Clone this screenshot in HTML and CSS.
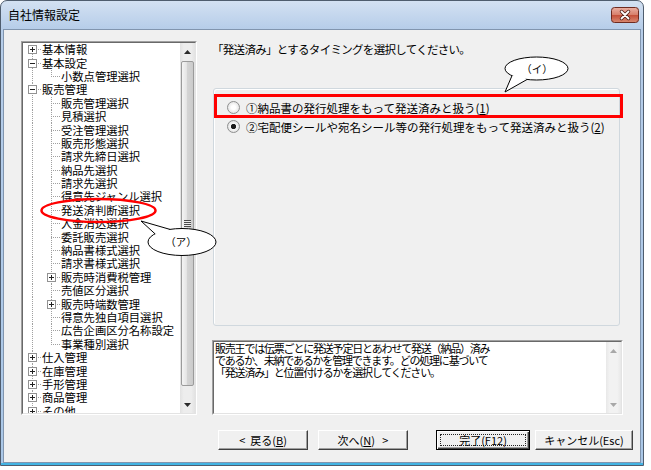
FILE: index.html
```html
<!DOCTYPE html>
<html lang="ja">
<head>
<meta charset="utf-8">
<title>自社情報設定</title>
<link rel="stylesheet" href="styles.css">
</head>
<body>
<div class="window">
  <div class="titlebar">
    <span class="title">自社情報設定</span>
    <span class="close">
      <svg width="28" height="16" viewBox="0 0 28 16">
        <defs>
          <linearGradient id="cg" x1="0" y1="0" x2="0" y2="1">
            <stop offset="0" stop-color="#eab0a3"/>
            <stop offset="0.48" stop-color="#d8806c"/>
            <stop offset="0.52" stop-color="#c5503a"/>
            <stop offset="1" stop-color="#d98a72"/>
          </linearGradient>
        </defs>
        <rect x="0.5" y="0.5" width="27" height="15" rx="3" fill="url(#cg)" stroke="#6e2b20"/>
        <path d="M10.5 4.5l7 7M17.5 4.5l-7 7" stroke="#4e1f17" stroke-width="3.4" stroke-linecap="round"/>
        <path d="M10.5 4.5l7 7M17.5 4.5l-7 7" stroke="#fff" stroke-width="1.8" stroke-linecap="round"/>
      </svg>
    </span>
  </div>
  <div class="client">
    <div class="main">
      <div class="tree">
        <div class="tree-inner">
          <div class="items">
            <div class="row"><span class="g1 hvb"><svg class="pm" width="9" height="9" viewBox="0 0 9 9"><rect x="0.5" y="0.5" width="8" height="8" fill="#fff" stroke="#929292"/><path d="M2 4.5h5M4.5 2v5" stroke="#222"/></svg></span><span class="lbl">基本情報</span></div>
            <div class="row"><span class="g1 hv"><svg class="pm" width="9" height="9" viewBox="0 0 9 9"><rect x="0.5" y="0.5" width="8" height="8" fill="#fff" stroke="#929292"/><path d="M2 4.5h5" stroke="#222"/></svg></span><span class="lbl">基本設定</span></div>
            <div class="row"><span class="g1 v"></span><span class="g2 hvt"></span><span class="lbl">小数点管理選択</span></div>
            <div class="row"><span class="g1 hv"><svg class="pm" width="9" height="9" viewBox="0 0 9 9"><rect x="0.5" y="0.5" width="8" height="8" fill="#fff" stroke="#929292"/><path d="M2 4.5h5" stroke="#222"/></svg></span><span class="lbl">販売管理</span></div>
            <div class="row"><span class="g1 v"></span><span class="g2 hv"></span><span class="lbl">販売管理選択</span></div>
            <div class="row"><span class="g1 v"></span><span class="g2 hv"></span><span class="lbl">見積選択</span></div>
            <div class="row"><span class="g1 v"></span><span class="g2 hv"></span><span class="lbl">受注管理選択</span></div>
            <div class="row"><span class="g1 v"></span><span class="g2 hv"></span><span class="lbl">販売形態選択</span></div>
            <div class="row"><span class="g1 v"></span><span class="g2 hv"></span><span class="lbl">請求先締日選択</span></div>
            <div class="row"><span class="g1 v"></span><span class="g2 hv"></span><span class="lbl">納品先選択</span></div>
            <div class="row"><span class="g1 v"></span><span class="g2 hv"></span><span class="lbl">請求先選択</span></div>
            <div class="row"><span class="g1 v"></span><span class="g2 hv"></span><span class="lbl">得意先ジャンル選択</span></div>
            <div class="row"><span class="g1 v"></span><span class="g2 hv"></span><span class="lbl">発送済判断選択</span></div>
            <div class="row"><span class="g1 v"></span><span class="g2 hv"></span><span class="lbl">入金消込選択</span></div>
            <div class="row"><span class="g1 v"></span><span class="g2 hv"></span><span class="lbl">委託販売選択</span></div>
            <div class="row"><span class="g1 v"></span><span class="g2 hv"></span><span class="lbl">納品書様式選択</span></div>
            <div class="row"><span class="g1 v"></span><span class="g2 hv"></span><span class="lbl">請求書様式選択</span></div>
            <div class="row"><span class="g1 v"></span><span class="g2 hv"><svg class="pm" width="9" height="9" viewBox="0 0 9 9"><rect x="0.5" y="0.5" width="8" height="8" fill="#fff" stroke="#929292"/><path d="M2 4.5h5M4.5 2v5" stroke="#222"/></svg></span><span class="lbl">販売時消費税管理</span></div>
            <div class="row"><span class="g1 v"></span><span class="g2 hv"></span><span class="lbl">売値区分選択</span></div>
            <div class="row"><span class="g1 v"></span><span class="g2 hv"><svg class="pm" width="9" height="9" viewBox="0 0 9 9"><rect x="0.5" y="0.5" width="8" height="8" fill="#fff" stroke="#929292"/><path d="M2 4.5h5M4.5 2v5" stroke="#222"/></svg></span><span class="lbl">販売時端数管理</span></div>
            <div class="row"><span class="g1 v"></span><span class="g2 hv"></span><span class="lbl">得意先独自項目選択</span></div>
            <div class="row"><span class="g1 v"></span><span class="g2 hv"></span><span class="lbl">広告企画区分名称設定</span></div>
            <div class="row"><span class="g1 v"></span><span class="g2 hvt"></span><span class="lbl">事業種別選択</span></div>
            <div class="row"><span class="g1 hv"><svg class="pm" width="9" height="9" viewBox="0 0 9 9"><rect x="0.5" y="0.5" width="8" height="8" fill="#fff" stroke="#929292"/><path d="M2 4.5h5M4.5 2v5" stroke="#222"/></svg></span><span class="lbl">仕入管理</span></div>
            <div class="row"><span class="g1 hv"><svg class="pm" width="9" height="9" viewBox="0 0 9 9"><rect x="0.5" y="0.5" width="8" height="8" fill="#fff" stroke="#929292"/><path d="M2 4.5h5M4.5 2v5" stroke="#222"/></svg></span><span class="lbl">在庫管理</span></div>
            <div class="row"><span class="g1 hv"><svg class="pm" width="9" height="9" viewBox="0 0 9 9"><rect x="0.5" y="0.5" width="8" height="8" fill="#fff" stroke="#929292"/><path d="M2 4.5h5M4.5 2v5" stroke="#222"/></svg></span><span class="lbl">手形管理</span></div>
            <div class="row"><span class="g1 hv"><svg class="pm" width="9" height="9" viewBox="0 0 9 9"><rect x="0.5" y="0.5" width="8" height="8" fill="#fff" stroke="#929292"/><path d="M2 4.5h5M4.5 2v5" stroke="#222"/></svg></span><span class="lbl">商品管理</span></div>
            <div class="row"><span class="g1 hvt"><svg class="pm" width="9" height="9" viewBox="0 0 9 9"><rect x="0.5" y="0.5" width="8" height="8" fill="#fff" stroke="#929292"/><path d="M2 4.5h5M4.5 2v5" stroke="#222"/></svg></span><span class="lbl">その他</span></div>
          </div>
          <div class="vscroll">
            <div class="sb-btn"><svg width="7" height="4" viewBox="0 0 7 4"><path d="M0 4h7L3.5 0z" fill="#2b2b2b"/></svg></div>
            <div class="sb-track"><div class="thumb"><span class="grip"></span></div></div>
            <div class="sb-btn"><svg width="7" height="4" viewBox="0 0 7 4"><path d="M0 0h7L3.5 4z" fill="#2b2b2b"/></svg></div>
          </div>
        </div>
      </div>
      <div class="right">
        <div class="heading">「発送済み」とするタイミングを選択してください。</div>
        <div class="group">
          <div class="radio-row"><span class="radio"></span><span>①納品書の発行処理をもって発送済みと扱う(<u>1</u>)</span></div>
          <div class="radio-row"><span class="radio checked"></span><span>②宅配便シールや宛名シール等の発行処理をもって発送済みと扱う(<u>2</u>)</span></div>
        </div>
        <div class="memo">
          <div class="memo-inner">
            <div class="memo-text">販売王では伝票ごとに発送予定日とあわせて発送（納品）済み<br>であるか、未納であるかを管理できます。どの処理に基づいて<br>「発送済み」と位置付けるかを選択してください。</div>
            <div class="vscroll disabled">
              <div class="sb-btn"><svg width="7" height="4" viewBox="0 0 7 4"><path d="M0 4h7L3.5 0z" fill="#a8a8a8"/></svg></div>
              <div class="sb-track"></div>
              <div class="sb-btn"><svg width="7" height="4" viewBox="0 0 7 4"><path d="M0 0h7L3.5 4z" fill="#a8a8a8"/></svg></div>
            </div>
          </div>
        </div>
      </div>
    </div>
    <div class="buttons">
      <div class="btn w90">&lt;&nbsp;&nbsp;戻る(<u>B</u>)</div>
      <div class="btn w90 gap10">次へ(<u>N</u>)&nbsp;&nbsp;&nbsp;&gt;</div>
      <div class="btn default w94 gap28"><span class="focus">完了(F12)</span></div>
      <div class="btn w98 gap5">キャンセル(Esc)</div>
    </div>
    <svg class="annot" width="636" height="432" viewBox="0 0 636 432">
      <rect x="211.5" y="65.5" width="406" height="21" fill="none" stroke="#ff0000" stroke-width="3"/>
      <ellipse cx="94.5" cy="180.5" rx="57" ry="11.5" fill="none" stroke="#ff0000" stroke-width="2.5"/>
      <ellipse cx="178" cy="212" rx="34" ry="13.5" fill="#fff" stroke="#000" stroke-width="1"/>
      <polygon points="151,203.8 137,191 166,199.4 160,205" fill="#fff"/>
      <polyline points="151,203.8 137,191 166,199.4" fill="none" stroke="#000" stroke-width="1"/>
      <text x="177" y="216" class="ctext" text-anchor="middle">（ア）</text>
      <ellipse cx="532.5" cy="38.5" rx="31.5" ry="11.5" fill="#fff" stroke="#000" stroke-width="1"/>
      <polygon points="508,45.7 501,62 523,49.5 515,44" fill="#fff"/>
      <polyline points="508,45.7 501,62 523,49.5" fill="none" stroke="#000" stroke-width="1"/>
      <text x="533" y="42.5" class="ctext" text-anchor="middle">（イ）</text>
    </svg>
  </div>
</div>
</body>
</html>
```
FILE: styles.css
```css
html, body {
  margin: 0;
  padding: 0;
  background: #ffffff;
}
body {
  font-family: "Noto Sans CJK JP", "Liberation Sans", sans-serif;
  color: #000;
}
.window {
  width: 644px;
  height: 466px;
  box-sizing: border-box;
  border: 1px solid #4f5d6e;
  border-radius: 7px 7px 0 0;
  padding: 0 2px 2px 2px;
  background: linear-gradient(to bottom, #d3e1f2 0, #b6cde9 28px, #aac7e7 100%);
  box-shadow: inset 0 -2px #42b4e4;
  display: flex;
  flex-direction: column;
}
.titlebar {
  flex: none;
  height: 28px;
  display: flex;
  align-items: center;
  justify-content: space-between;
  padding: 0 2px 0 5px;
}
.title {
  font-size: 12px;
  line-height: 14px;
}
.close {
  display: flex;
  height: 16px;
}
.client {
  flex: 1;
  position: relative;
  background: #f0f0f0;
  border: 1px solid #8195ae;
  padding: 11px 0 0 17px;
  overflow: hidden;
}
.main {
  display: flex;
  height: 374px;
}
.tree {
  width: 176px;
  height: 374px;
  box-sizing: border-box;
  border: 1px solid;
  border-color: #a0a0a0 #ffffff #ffffff #a0a0a0;
  display: flex;
  flex: none;
}
.tree-inner {
  flex: 1;
  display: flex;
  border: 1px solid;
  border-color: #696969 #e3e3e3 #e3e3e3 #696969;
  background: #fff;
  overflow: hidden;
}
.items {
  flex: 1;
  overflow: hidden;
  background: #fff;
}
.row {
  height: 13.4px;
  display: flex;
  align-items: center;
  font-size: 11.3px;
  white-space: nowrap;
}
.lbl {
  padding: 0 1px;
  line-height: 13px;
}
.g1, .g2 {
  flex: none;
  height: 100%;
  display: flex;
  align-items: center;
  box-sizing: border-box;
}
.g1 { width: 18px; padding-left: 5px; }
.g2 { width: 19px; padding-left: 6px; }
.pm { display: block; }
.g1.hv {
  background:
    repeating-linear-gradient(to right, #a0a0a0 0 1px, transparent 1px 2px) 9px 50% / 9px 1px no-repeat,
    repeating-linear-gradient(to bottom, #a0a0a0 0 1px, transparent 1px 2px) 9px 0 / 1px 100% no-repeat;
}
.g1.hvb {
  background:
    repeating-linear-gradient(to right, #a0a0a0 0 1px, transparent 1px 2px) 9px 50% / 9px 1px no-repeat,
    repeating-linear-gradient(to bottom, #a0a0a0 0 1px, transparent 1px 2px) 9px 100% / 1px 50% no-repeat;
}
.g1.hvt {
  background:
    repeating-linear-gradient(to right, #a0a0a0 0 1px, transparent 1px 2px) 9px 50% / 9px 1px no-repeat,
    repeating-linear-gradient(to bottom, #a0a0a0 0 1px, transparent 1px 2px) 9px 0 / 1px 50% no-repeat;
}
.g1.v {
  background:
    repeating-linear-gradient(to bottom, #a0a0a0 0 1px, transparent 1px 2px) 9px 0 / 1px 100% no-repeat;
}
.g2.hv {
  background:
    repeating-linear-gradient(to right, #a0a0a0 0 1px, transparent 1px 2px) 10px 50% / 9px 1px no-repeat,
    repeating-linear-gradient(to bottom, #a0a0a0 0 1px, transparent 1px 2px) 10px 0 / 1px 100% no-repeat;
}
.g2.hvt {
  background:
    repeating-linear-gradient(to right, #a0a0a0 0 1px, transparent 1px 2px) 10px 50% / 9px 1px no-repeat,
    repeating-linear-gradient(to bottom, #a0a0a0 0 1px, transparent 1px 2px) 10px 0 / 1px 50% no-repeat;
}
.vscroll {
  width: 15px;
  flex: none;
  display: flex;
  flex-direction: column;
  background: linear-gradient(to right, #e2e2e2 0, #ededed 25%, #ededed 75%, #e2e2e2 100%);
}
.vscroll.disabled {
  background: linear-gradient(to right, #e8e8e8 0, #f2f2f2 25%, #f2f2f2 75%, #e8e8e8 100%);
}
.sb-btn {
  height: 17px;
  flex: none;
  display: flex;
  align-items: center;
  justify-content: center;
}
.sb-track {
  flex: 1;
  padding-top: 1px;
}
.thumb {
  height: 325px;
  margin: 0 1px;
  box-sizing: border-box;
  border: 1px solid #9b9b9b;
  border-radius: 2px;
  background: linear-gradient(to right, #f4f4f4 0, #e6e6e6 40%, #d4d4d4 50%, #cbcbcb 100%);
  display: flex;
  align-items: center;
  justify-content: center;
}
.grip {
  width: 7px;
  height: 7px;
  background: repeating-linear-gradient(to bottom, #4a4a4a 0 1px, #ececec 1px 2px);
}
.right {
  margin-left: 15px;
  width: 411px;
  display: flex;
  flex-direction: column;
}
.heading {
  height: 15px;
  box-sizing: border-box;
  padding-top: 1px;
  font-size: 11.5px;
  line-height: 14px;
  letter-spacing: -0.7px;
  white-space: nowrap;
}
.group {
  margin: 32px 3px 0 1px;
  height: 238px;
  box-sizing: border-box;
  border: 1px solid #d0d8de;
  border-radius: 3px;
  box-shadow: inset 1px 1px #ffffff;
  padding: 9px 0 0 13px;
}
.radio-row {
  height: 19px;
  display: flex;
  align-items: center;
  font-size: 11.5px;
  white-space: nowrap;
}
.radio {
  width: 13px;
  height: 13px;
  box-sizing: border-box;
  border-radius: 50%;
  border: 1px solid #8e8f8f;
  background: radial-gradient(circle, #ffffff 0 2px, #e4e4e4 6px);
  margin-right: 6px;
  flex: none;
}
.radio.checked {
  background: radial-gradient(circle, #1b1b1b 0 2.2px, #f8f8f8 3px, #e0e0e0 6px);
}
.memo {
  margin-top: 14px;
  width: 411px;
  height: 75px;
  box-sizing: border-box;
  border: 1px solid;
  border-color: #a0a0a0 #ffffff #ffffff #a0a0a0;
  display: flex;
}
.memo-inner {
  flex: 1;
  display: flex;
  border: 1px solid;
  border-color: #696969 #e3e3e3 #e3e3e3 #696969;
  background: #fff;
}
.memo-text {
  flex: 1;
  font-size: 11px;
  line-height: 12px;
  letter-spacing: -1.2px;
  white-space: nowrap;
  overflow: hidden;
  padding: 0 0 0 1px;
}
.buttons {
  display: flex;
  margin-top: 15px;
  margin-left: 197px;
  height: 20px;
}
.btn {
  height: 20px;
  box-sizing: border-box;
  display: flex;
  align-items: center;
  justify-content: center;
  font-size: 11px;
  white-space: nowrap;
  background: #f0f0f0;
  border: 1px solid;
  border-color: #ffffff #404040 #404040 #ffffff;
  box-shadow: inset -1px -1px #a0a0a0;
}
.btn.default {
  border: 1px solid #000;
  box-shadow: inset 1px 1px #ffffff, inset -1px -1px #404040, inset -2px -2px #a0a0a0;
  padding: 3px;
}
.focus {
  flex: 1;
  align-self: stretch;
  display: flex;
  align-items: center;
  justify-content: center;
  border: 1px dotted #222;
}
.w90 { width: 90px; }
.w94 { width: 94px; }
.w98 { width: 98px; }
.gap10 { margin-left: 10px; }
.gap28 { margin-left: 28px; }
.gap5 { margin-left: 5px; }
.annot {
  position: absolute;
  left: 0;
  top: 0;
  pointer-events: none;
}
.ctext {
  font-family: "Noto Sans CJK JP", sans-serif;
  font-size: 10.5px;
}
```
